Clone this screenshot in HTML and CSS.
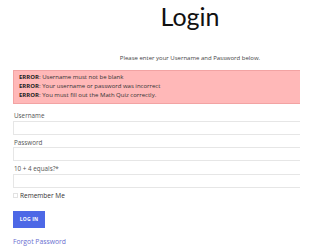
FILE: index.html
```html
<!DOCTYPE html>
<html>
<head>
<meta charset="utf-8">
<link rel="stylesheet" href="styles.css">
</head>
<body>
<div class="frame">
<div class="page">
  <h1 class="title">Login</h1>
  <p class="intro">Please enter your Username and Password below.</p>
  <div class="errors">
    <p><b>ERROR</b>: Username must not be blank</p>
    <p><b>ERROR</b>: Your username or password was incorrect</p>
    <p><b>ERROR</b>: You must fill out the Math Quiz correctly.</p>
  </div>
  <form class="form">
    <label class="label">Username</label>
    <div class="input"></div>
    <label class="label">Password</label>
    <div class="input"></div>
    <label class="label">10 + 4 equals?*</label>
    <div class="input"></div>
    <div class="remember"><span class="check"></span><span>Remember Me</span></div>
    <div class="btn">LOG IN</div>
    <a class="forgot">Forgot Password</a>
  </form>
</div>
</div>
</body>
</html>
```
FILE: styles.css
```css
html, body {
  margin: 0;
  padding: 0;
  background: #fff;
}
body {
  font-family: "Open Sans", "Liberation Sans", sans-serif;
  color: #333;
}
.frame {
  width: 300px;
  height: 249px;
  overflow: hidden;
}
.page {
  width: 354px;
  margin-left: 13px;
}
.title {
  margin: 0;
  padding-top: 1px;
  text-align: center;
  font-family: "Lato", "Open Sans", sans-serif;
  font-size: 25px;
  line-height: 30px;
  font-weight: 400;
  color: #111;
}
.intro {
  margin: 23px 0 0;
  text-align: center;
  font-size: 6px;
  line-height: 9px;
  color: #444;
}
.errors {
  margin-top: 7px;
  background: #ffb8b8;
  border: 1px solid #f2a3a3;
  padding: 2px 5px 3px;
}
.errors p {
  margin: 0;
  font-size: 6px;
  line-height: 9px;
  color: #333;
}
.errors b {
  font-weight: 700;
  color: #222;
}
.form {
  display: flex;
  flex-direction: column;
  margin-top: 7px;
}
.label {
  font-size: 6.3px;
  line-height: 9.5px;
  color: #555;
  padding-left: 1px;
}
.input {
  height: 12px;
  border: 1px solid #e6e6e6;
  margin: 0 0 3px;
}
.remember {
  display: flex;
  align-items: center;
  gap: 2px;
  font-size: 6.5px;
  line-height: 10px;
  color: #333;
}
.check {
  width: 3px;
  height: 3px;
  border: 1px solid #e2e2e2;
}
.btn {
  align-self: flex-start;
  margin-top: 10px;
  width: 32px;
  height: 17px;
  background: #4d68e6;
  color: #fff;
  font-size: 5px;
  font-weight: 700;
  line-height: 17px;
  text-align: center;
  letter-spacing: 0.2px;
}
.forgot {
  margin-top: 9px;
  font-size: 6.8px;
  line-height: 10px;
  color: #6a6fd0;
}
```
